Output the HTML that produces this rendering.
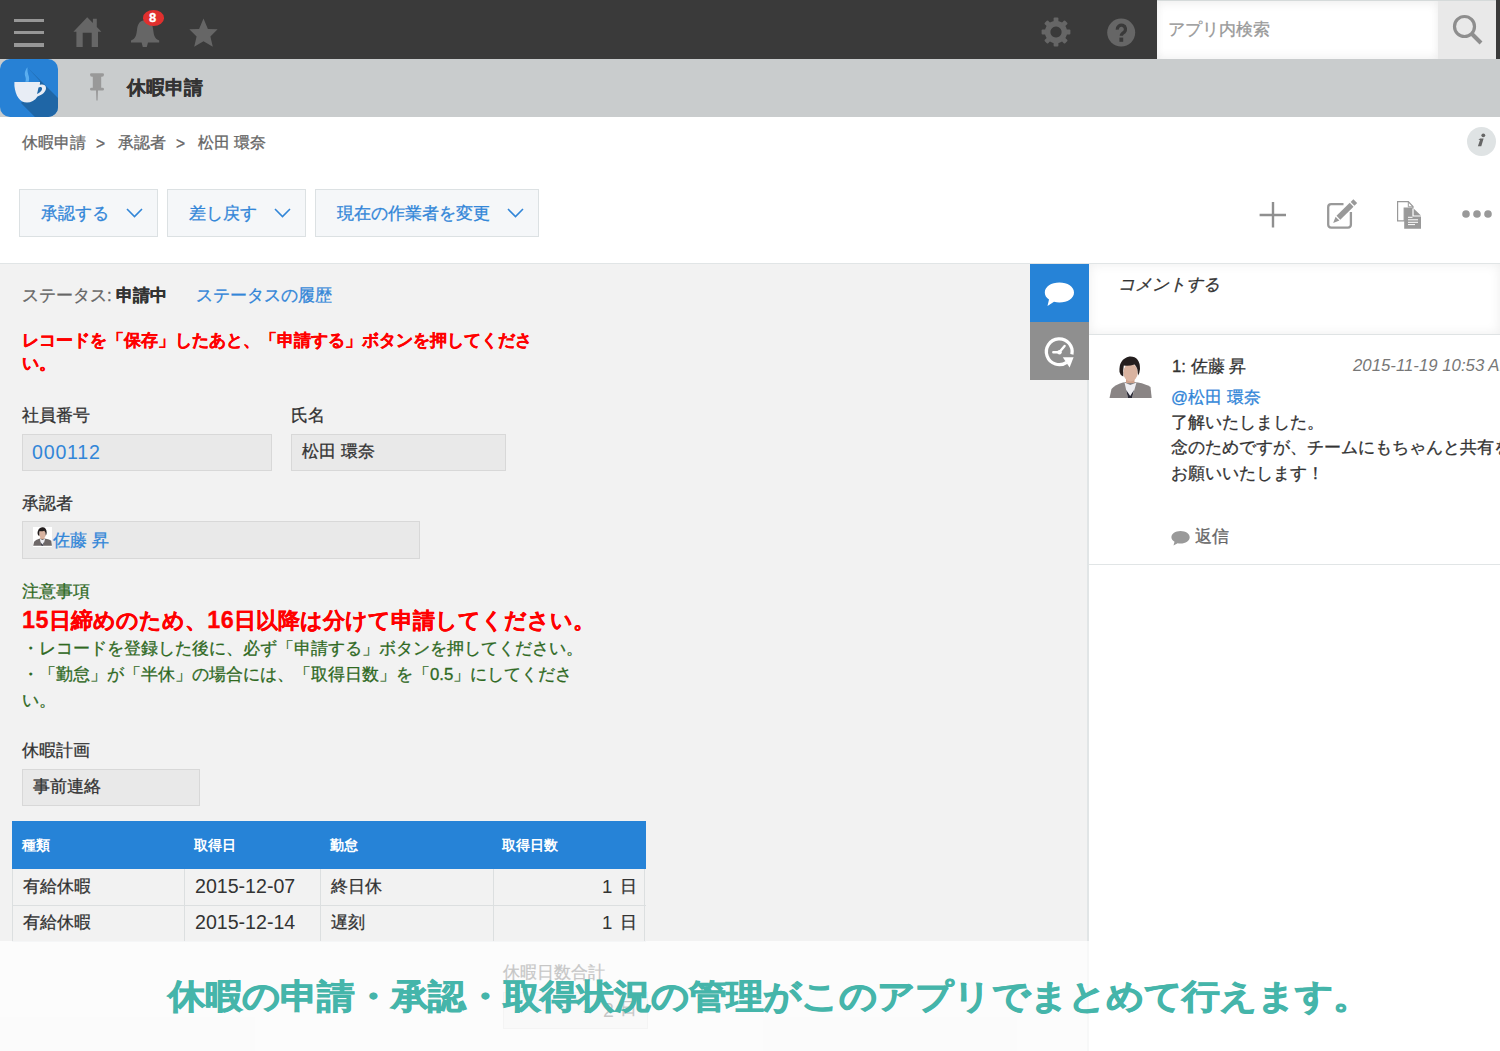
<!DOCTYPE html>
<html lang="ja">
<head>
<meta charset="utf-8">
<style>
html,body{margin:0;padding:0;}
body{width:1500px;height:1051px;overflow:hidden;position:relative;background:#fff;font-family:"Liberation Sans",sans-serif;color:#333;}
.a{position:absolute;}
.t{position:absolute;white-space:nowrap;line-height:1;-webkit-text-stroke:0.3px currentColor;}
svg{position:absolute;overflow:visible;}
.btn{background:#f5f7f9;border:1px solid #dce1e3;box-sizing:border-box;}
.bt{font-size:16.8px;color:#3286d8;}
.lbl{font-size:16.8px;color:#333;}
.fld{background:#e9e9e9;border:1px solid #d8d8d8;box-sizing:border-box;}
.th{font-size:14.4px;font-weight:bold;color:#fff;-webkit-text-stroke:0;}
</style>
</head>
<body>
<!-- top bar -->
<div class="a" style="left:0;top:0;width:1500px;height:59px;background:#3a3a3a;"></div>
<!-- hamburger -->
<div class="a" style="left:14px;top:19px;width:30px;height:3.2px;background:#979797;"></div>
<div class="a" style="left:14px;top:31px;width:30px;height:3.2px;background:#979797;"></div>
<div class="a" style="left:14px;top:43px;width:30px;height:3.6px;background:#979797;"></div>
<!-- home -->
<svg style="left:0;top:0" width="1500" height="59">
  <path fill="#666" d="M87.2 17.2 L73.4 31.8 L76.4 31.8 L76.4 47 L82.7 47 L82.7 32.8 L91.7 32.8 L91.7 47 L98 47 L98 31.8 L101.4 31.8 L96.8 26.9 L96.8 18.8 L92.9 18.8 L92.9 22.9 Z"/>
  <!-- bell -->
  <path fill="#666" d="M145.3 20.3 C139.5 20.3 137.6 24.5 137 30 C136.3 36 135.3 38.8 131 40.5 L131 42.4 L159.2 42.4 L159.2 40.5 C154.9 38.8 153.9 36 153.2 30 C152.6 24.5 151 20.3 145.3 20.3 Z M141.6 42.4 L148 42.4 L146.8 47 L142.8 47 Z"/>
  <!-- star -->
  <path fill="#666" d="M203.5 18.6 L207.9 28.9 L217.6 29.3 L210.4 36.5 L212.8 46.7 L203.5 41.2 L194.2 46.7 L196.6 36.5 L189.3 29.3 L199.1 28.9 Z"/>
  <!-- gear -->
  <g transform="translate(1056 32)" fill="#666">
    <path fill-rule="evenodd" d="M0 -11.2 A11.2 11.2 0 1 1 -0.01 -11.2 Z M0 -5.6 A5.6 5.6 0 1 0 0.01 -5.6 Z"/>
    <rect x="-2.4" y="-14.4" width="4.8" height="5" rx="1"/>
    <rect x="-2.4" y="9.4" width="4.8" height="5" rx="1"/>
    <rect x="-14.4" y="-2.4" width="5" height="4.8" rx="1"/>
    <rect x="9.4" y="-2.4" width="5" height="4.8" rx="1"/>
    <g transform="rotate(45)">
      <rect x="-2.4" y="-14.4" width="4.8" height="5" rx="1"/>
      <rect x="-2.4" y="9.4" width="4.8" height="5" rx="1"/>
      <rect x="-14.4" y="-2.4" width="5" height="4.8" rx="1"/>
      <rect x="9.4" y="-2.4" width="5" height="4.8" rx="1"/>
    </g>
  </g>
  <!-- help -->
  <circle cx="1121.2" cy="32.6" r="14" fill="#666"/>
</svg>
<svg style="left:0;top:0" width="1200" height="59">
  <path d="M1117.3 29.6 A4.1 4.1 0 1 1 1124.2 32.2 Q1121.3 34 1121.3 35.8" fill="none" stroke="#3a3a3a" stroke-width="3.3"/>
  <rect x="1119.4" y="37.6" width="3.8" height="4.2" fill="#3a3a3a"/>
</svg>
<!-- badge -->
<div class="a" style="left:143px;top:10px;width:21px;height:15.5px;border-radius:50%;background:#e0302e;"></div>
<div class="t" style="left:149px;top:11px;font-size:13px;font-weight:bold;color:#fff;">8</div>

<!-- search -->
<div class="a" style="left:1157px;top:0;width:281px;height:59px;background:#fff;box-shadow:inset 0 4px 8px rgba(0,0,0,0.05),inset 0 -4px 8px rgba(0,0,0,0.04);border-top:1.5px solid #d5dada;box-sizing:border-box;"></div>
<div class="t" style="left:1168px;top:22px;font-size:16.8px;color:#999;">アプリ内検索</div>
<div class="a" style="left:1438px;top:0;width:58px;height:59px;background:#e9e9e9;border-top:1.5px solid #d5dada;box-sizing:border-box;"></div>
<svg style="left:0;top:0" width="1500" height="59">
  <circle cx="1464.5" cy="26.5" r="10" fill="none" stroke="#8e8e8e" stroke-width="3.2"/>
  <path d="M1471.5 33.5 L1481 43" stroke="#8e8e8e" stroke-width="4" />
</svg>

<!-- gray app bar -->
<div class="a" style="left:0;top:59px;width:1500px;height:58px;background:#c9cccd;"></div>
<div class="a" style="left:0;top:59px;width:58px;height:58px;border-radius:10px;background:#2781d5;overflow:hidden;">
  <svg style="left:0;top:0" width="58" height="58">
    <path fill="#1f66a6" d="M27 8 L60 41 L60 60 L37 60 L21 44 L40 22 Z"/>
    <path fill="#e8edf5" d="M14.4 23 L40 23 C40 24 40 25 39.8 26 C42 25 46 25.5 46 29 C46 33 42 36 37.5 37.5 C35 41.5 31 43.6 27 43.6 C20 43.6 15.5 37 14.4 27 Z M38.5 28.5 C38 31 37.5 33 37 35 C39.5 34 42.5 31.5 42 29 C41.5 27.8 39.5 27.6 38.5 28.5 Z" fill-rule="evenodd"/>
    <path fill="#5aaef0" d="M27.5 8.3 C24.5 12 24.5 15 25.3 17.5 C26 19.5 26 21 25.3 22.8 L28.6 22.8 C29.5 20.5 29.2 18 28.4 16 C27.6 13.5 27.3 11 27.5 8.3 Z"/>
  </svg>
</div>
<svg style="left:0;top:0" width="200" height="117">
  <path fill="#999" d="M90 74.5 Q90 73.2 91.5 73.2 L102.5 73.2 Q104 73.2 104 74.5 Q104 76.8 102 76.8 L101.2 76.8 L101.2 87.8 L102.5 87.8 Q104 87.8 104 89.2 Q104 90.6 102.5 90.6 L98 90.6 L97.6 100.6 L96.4 100.6 L96 90.6 L91.5 90.6 Q90 90.6 90 89.2 Q90 87.8 91.5 87.8 L92.8 87.8 L92.8 76.8 L92 76.8 Q90 76.8 90 74.5 Z"/>
</svg>
<div class="t" style="left:127px;top:78px;font-size:19.2px;font-weight:bold;color:#333;">休暇申請</div>

<!-- breadcrumb -->
<div class="t" style="left:22px;top:135px;font-size:15.6px;color:#666;">休暇申請</div>
<div class="t" style="left:96px;top:136px;font-size:15.6px;color:#666;">&gt;</div>
<div class="t" style="left:118px;top:135px;font-size:15.6px;color:#666;">承認者</div>
<div class="t" style="left:176px;top:136px;font-size:15.6px;color:#666;">&gt;</div>
<div class="t" style="left:198px;top:135px;font-size:15.6px;color:#666;">松田 環奈</div>
<!-- info -->
<div class="a" style="left:1467px;top:127px;width:29px;height:29px;border-radius:50%;background:#dfe3e4;"></div>
<svg style="left:0;top:0" width="1500" height="170">
  <circle cx="1483.3" cy="135.3" r="1.9" fill="#666"/>
  <path d="M1478.4 139.6 L1480.2 138.5 L1483.6 138.5 L1481.3 146.2 L1477.9 146.2 L1480 140 Z" fill="#666"/>
</svg>
<!-- buttons -->
<div class="a btn" style="left:19px;top:189px;width:139px;height:48px;"></div>
<div class="a btn" style="left:167px;top:189px;width:139px;height:48px;"></div>
<div class="a btn" style="left:315px;top:189px;width:224px;height:48px;"></div>
<div class="t bt" style="left:41px;top:206px;">承認する</div>
<div class="t bt" style="left:189px;top:206px;">差し戻す</div>
<div class="t bt" style="left:337px;top:206px;">現在の作業者を変更</div>
<svg style="left:0;top:0" width="600" height="263">
  <path d="M127 209 L134.5 216.5 L142 209" fill="none" stroke="#3286d8" stroke-width="1.6"/>
  <path d="M275 209 L282.5 216.5 L290 209" fill="none" stroke="#3286d8" stroke-width="1.6"/>
  <path d="M508 209 L515.5 216.5 L523 209" fill="none" stroke="#3286d8" stroke-width="1.6"/>
</svg>
<!-- toolbar icons -->
<svg style="left:0;top:0" width="1500" height="263">
  <g fill="none" stroke="#8f8f8f" stroke-width="2.4">
    <path d="M1259.6 215 L1286 215 M1273 202 L1273 227.5"/>
  </g>
  <path d="M1343.5 204.2 L1331.2 204.2 Q1328.2 204.2 1328.2 207.2 L1328.2 224.6 Q1328.2 227.6 1331.2 227.6 L1347.9 227.6 Q1350.9 227.6 1350.9 224.6 L1350.9 212" fill="none" stroke="#999" stroke-width="2.3"/>
  <g transform="translate(1333.2 222.9) rotate(-44.6)" fill="#999">
    <path d="M0 0 L6 -2.7 L6 2.7 Z"/>
    <rect x="7.3" y="-2.7" width="18.6" height="5.4"/>
    <rect x="27.2" y="-2.7" width="3.8" height="5.4"/>
  </g>
  <path d="M1397.6 201.6 L1408.3 201.6 L1413 206.6 L1413 208 L1404.2 208 L1404.2 220.8 L1397.6 220.8 Z" fill="#fff" stroke="#999" stroke-width="1.2"/>
  <path d="M1408.3 201.6 L1408.3 206.8 L1413 206.8" fill="none" stroke="#999" stroke-width="1"/>
  <path d="M1404.2 208 L1412.4 208 L1412.4 216.6 L1421 216.6 L1421 228.7 L1404.2 228.7 Z" fill="#999"/>
  <path d="M1413.6 208.6 L1421 215.6 L1413.6 215.6 Z" fill="#999"/>
  <path d="M1408 217.3 L1412.5 217.3 M1408 219.8 L1418 219.8 M1408 222.3 L1418 222.3 M1408 224.6 L1415 224.6" stroke="#fff" stroke-width="1"/>
  <circle cx="1466" cy="214" r="3.8" fill="#999"/>
  <circle cx="1477" cy="214" r="3.8" fill="#999"/>
  <circle cx="1488" cy="214" r="3.8" fill="#999"/>
</svg>
<!-- separator -->
<div class="a" style="left:0;top:263px;width:1500px;height:1px;background:#e1e5e6;"></div>
<!-- left panel -->
<div class="a" style="left:0;top:264px;width:1088px;height:787px;background:#f2f2f2;"></div>
<div class="a" style="left:1087px;top:264px;width:2px;height:787px;background:#e1e5e6;"></div>

<!-- status -->
<div class="t" style="left:22px;top:288px;font-size:16.8px;color:#666;">ステータス: <b style="color:#333">申請中</b></div>
<div class="t" style="left:196px;top:288px;font-size:16.8px;color:#3286d8;">ステータスの履歴</div>
<div class="t" style="left:22px;top:333px;font-size:16.8px;font-weight:bold;color:#f00;">レコードを「保存」したあと、「申請する」ボタンを押してくださ</div>
<div class="t" style="left:22px;top:356px;font-size:16.8px;font-weight:bold;color:#f00;">い。</div>

<!-- fields -->
<div class="t lbl" style="left:22px;top:408px;">社員番号</div>
<div class="a fld" style="left:22px;top:434px;width:250px;height:37px;"></div>
<div class="t" style="left:32px;top:443px;font-size:19.6px;letter-spacing:0.8px;color:#3286d8;-webkit-text-stroke:0;">000112</div>
<div class="t lbl" style="left:291px;top:408px;">氏名</div>
<div class="a fld" style="left:291px;top:434px;width:215px;height:37px;"></div>
<div class="t" style="left:302px;top:444px;font-size:16.8px;color:#333;">松田 環奈</div>

<div class="t lbl" style="left:22px;top:496px;">承認者</div>
<div class="a fld" style="left:22px;top:521px;width:398px;height:38px;"></div>
<div class="a" style="left:33px;top:527px;width:19px;height:20px;background:#fff;overflow:hidden;">
  <svg style="left:0;top:0" width="19" height="20" viewBox="0 0 43 45" preserveAspectRatio="none">
    <path d="M0.5 42 L2.5 33 Q6 28.5 14 26.5 L21 25.5 L29 26.5 Q37 28 41.5 31 L42.7 42 Z" fill="#6e6868"/>
    <rect x="17" y="21" width="8.5" height="6" fill="#cfa28c"/>
    <path d="M15.5 26.5 L19 42 L23 42 L27.5 26.5 L21.3 29 Z" fill="#eeeef2"/>
    <path d="M17.2 34 L19 42 L23 42 L25 34 L21.2 40 Z" fill="#2a2a35"/>
    <ellipse cx="21.5" cy="16.5" rx="7.2" ry="9" fill="#d9b3a0"/>
    <path d="M10.5 16 Q9.5 3 20.5 0.5 Q31 0 31 13 Q30.7 17 29 19.5 Q28.8 11 25.5 8.5 Q19.5 10.5 14.8 9.5 Q13.8 14 14.3 20.5 Q11 19 10.5 16 Z" fill="#241e1e"/>
  </svg>
</div>
<div class="t" style="left:53px;top:533px;font-size:16.8px;color:#3286d8;">佐藤 昇</div>

<!-- notice -->
<div class="t" style="left:22px;top:584px;font-size:16.8px;color:#2f691f;">注意事項</div>
<div class="t" style="left:22px;top:609px;font-size:21.6px;font-weight:bold;color:#f00;"><span style="font-size:23.4px;letter-spacing:0.6px">15</span>日締めのため、<span style="font-size:23.4px;letter-spacing:0.6px">16</span>日以降は分けて申請してください。</div>
<div class="t" style="left:22px;top:641px;font-size:16.8px;color:#2f691f;">・レコードを登録した後に、必ず「申請する」ボタンを押してください。</div>
<div class="t" style="left:22px;top:667px;font-size:16.8px;color:#2f691f;">・「勤怠」が「半休」の場合には、「取得日数」を「0.5」にしてくださ</div>
<div class="t" style="left:22px;top:693px;font-size:16.8px;color:#2f691f;">い。</div>

<div class="t lbl" style="left:22px;top:743px;">休暇計画</div>
<div class="a fld" style="left:22px;top:769px;width:178px;height:37px;"></div>
<div class="t" style="left:33px;top:779px;font-size:16.8px;color:#333;">事前連絡</div>

<!-- table -->
<div class="a" style="left:12px;top:821px;width:634px;height:48px;background:#2683d7;"></div>
<div class="t th" style="left:22px;top:838px;">種類</div>
<div class="t th" style="left:194px;top:838px;">取得日</div>
<div class="t th" style="left:330px;top:838px;">勤怠</div>
<div class="t th" style="left:502px;top:838px;">取得日数</div>
<div class="a" style="left:12px;top:869px;width:633px;height:72px;border-left:1px solid #dcdfe0;border-right:1px solid #dcdfe0;box-sizing:border-box;"></div>
<div class="a" style="left:12px;top:905px;width:634px;height:1px;background:#dcdfe0;"></div>
<div class="a" style="left:184px;top:869px;width:1px;height:72px;background:#dcdfe0;"></div>
<div class="a" style="left:320px;top:869px;width:1px;height:72px;background:#dcdfe0;"></div>
<div class="a" style="left:493px;top:869px;width:1px;height:72px;background:#dcdfe0;"></div>
<div class="t" style="left:23px;top:879px;font-size:16.8px;color:#333;">有給休暇</div>
<div class="t" style="left:195px;top:877px;font-size:19.6px;color:#333;-webkit-text-stroke:0;">2015-12-07</div>
<div class="t" style="left:331px;top:879px;font-size:16.8px;color:#333;">終日休</div>
<div class="t" style="left:602px;top:878px;font-size:18.6px;color:#333;-webkit-text-stroke:0;">1</div><div class="t" style="left:620px;top:879px;font-size:16.8px;color:#333;">日</div>
<div class="t" style="left:23px;top:915px;font-size:16.8px;color:#333;">有給休暇</div>
<div class="t" style="left:195px;top:913px;font-size:19.6px;color:#333;-webkit-text-stroke:0;">2015-12-14</div>
<div class="t" style="left:331px;top:915px;font-size:16.8px;color:#333;">遅刻</div>
<div class="t" style="left:602px;top:914px;font-size:18.6px;color:#333;-webkit-text-stroke:0;">1</div><div class="t" style="left:620px;top:915px;font-size:16.8px;color:#333;">日</div>
<div class="a" style="left:12px;top:941px;width:634px;height:1px;background:#dcdfe0;"></div>
<!-- total field (under overlay) -->
<div class="t lbl" style="left:503px;top:965px;">休暇日数合計</div>
<div class="a fld" style="left:503px;top:992px;width:145px;height:37px;"></div>
<div class="t" style="left:603px;top:1001px;font-size:19.6px;color:#333;-webkit-text-stroke:0;">2</div><div class="t" style="left:620px;top:1001px;font-size:16.8px;color:#333;">日</div>

<!-- side tabs -->
<div class="a" style="left:1030px;top:264px;width:59px;height:58px;background:#2683d7;"></div>
<div class="a" style="left:1030px;top:322px;width:59px;height:58px;background:#8f8f8f;"></div>
<svg style="left:0;top:0" width="1100" height="400">
  <path d="M1059.4 282.5 C1067.5 282.5 1074 286.5 1074 292.5 C1074 298.5 1067.5 302.5 1059.4 302.5 C1057.5 302.5 1055.8 302.3 1054 301.8 L1047.5 306 L1049 299.5 C1046.3 297.8 1044.8 295.3 1044.8 292.5 C1044.8 286.5 1051.3 282.5 1059.4 282.5 Z" fill="#fff"/>
  <path d="M1071.9 354.4 A12.9 12.9 0 1 0 1066.7 362.3" fill="none" stroke="#fff" stroke-width="3.3"/>
  <path d="M1062.8 357.2 L1073.6 357.2 L1069.6 367.6 Z" fill="#fff"/>
  <path d="M1053.3 352.3 L1059.3 352.3 L1064.6 345.9" fill="none" stroke="#fff" stroke-width="2.4" stroke-linecap="round"/>
  <circle cx="1059.5" cy="352.3" r="2.2" fill="#fff"/>
</svg>

<!-- comment box -->
<div class="a" style="left:1089px;top:264px;width:411px;height:70px;background:#fff;box-shadow:inset 0 0 12px rgba(0,0,0,0.07);border-bottom:1px solid #dfe3e4;box-sizing:content-box;"></div>
<div class="t" style="left:1118px;top:277px;font-size:16.8px;font-style:italic;color:#333;">コメントする</div>

<!-- comment -->
<div class="a" style="left:1109px;top:356px;width:43px;height:42px;background:#fff;overflow:hidden;">
  <svg style="left:0;top:0" width="43" height="42" viewBox="0 0 43 42">
    <path d="M0.5 42 L2.5 33 Q6 28.5 14 26.5 L21 25.5 L29 26.5 Q37 28 41.5 31 L42.7 42 Z" fill="#8a8585"/>
    <rect x="17" y="21" width="8.5" height="6" fill="#cfa28c"/>
    <path d="M15.5 26.5 L19 42 L23 42 L27.5 26.5 L21.3 29 Z" fill="#eeeef2"/>
    <path d="M17.2 34 L19 42 L23 42 L25 34 L21.2 40 Z" fill="#2a2a35"/>
    <ellipse cx="21.5" cy="16.5" rx="7.2" ry="9" fill="#d9b3a0"/>
    <path d="M10.5 16 Q9.5 3 20.5 0.5 Q31 0 31 13 Q30.7 17 29 19.5 Q28.8 11 25.5 8.5 Q19.5 10.5 14.8 9.5 Q13.8 14 14.3 20.5 Q11 19 10.5 16 Z" fill="#241e1e"/>
  </svg>
</div>
<div class="t" style="left:1172px;top:359px;font-size:16.8px;color:#333;">1: 佐藤 昇</div>
<div class="t" style="left:1353px;top:358px;font-size:16.8px;font-style:italic;color:#777;-webkit-text-stroke:0;">2015-11-19 10:53 AM</div>
<div class="t" style="left:1171px;top:390px;font-size:16.8px;color:#3286d8;">@松田 環奈</div>
<div class="t" style="left:1171px;top:415px;font-size:16.8px;color:#333;">了解いたしました。</div>
<div class="t" style="left:1171px;top:440px;font-size:16.8px;color:#333;">念のためですが、チームにもちゃんと共有をお願いします。</div>
<div class="t" style="left:1171px;top:466px;font-size:16.8px;color:#333;">お願いいたします！</div>
<svg style="left:0;top:0" width="1300" height="560">
  <path d="M1180.5 531 C1185.7 531 1189.7 533.8 1189.7 537.3 C1189.7 540.8 1185.7 543.6 1180.5 543.6 C1179.5 543.6 1178.5 543.5 1177.6 543.3 L1173.5 545.5 L1174.5 541.8 C1172.6 540.6 1171.4 539 1171.4 537.3 C1171.4 533.8 1175.4 531 1180.5 531 Z" fill="#999"/>
</svg>
<div class="t" style="left:1195px;top:529px;font-size:16.8px;color:#666;">返信</div>
<div class="a" style="left:1089px;top:564px;width:411px;height:1px;background:#e1e5e6;"></div>

<!-- overlay -->
<div class="a" style="left:0;top:941px;width:1500px;height:110px;background:rgba(255,255,255,0.72);"></div>
<div class="t" style="left:168px;top:978px;font-size:37.2px;letter-spacing:0.07px;transform:scaleY(0.9);transform-origin:0 50%;font-weight:bold;color:#45b5aa;-webkit-text-stroke:0.9px #45b5aa;">休暇の申請・承認・取得状況の管理がこのアプリでまとめて行えます。</div>
</body>
</html>
